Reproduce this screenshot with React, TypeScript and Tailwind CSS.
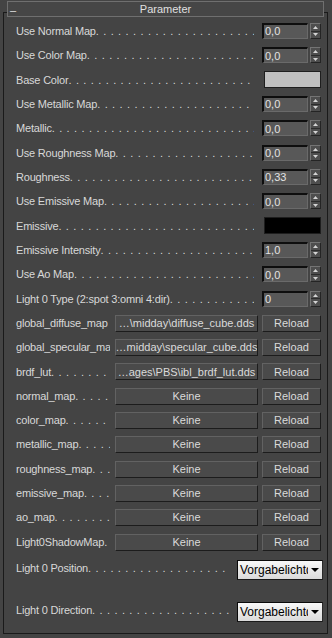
import React from 'react';

const DOTS = '.'.repeat(70);

type Row =
  | { kind: 'spin'; label: string; value: string }
  | { kind: 'color'; label: string; color: string }
  | { kind: 'map'; label: string; file: string; dots?: boolean };

const rows: Row[] = [
  { kind: 'spin', label: 'Use Normal Map', value: '0,0' },
  { kind: 'spin', label: 'Use Color Map', value: '0,0' },
  { kind: 'color', label: 'Base Color', color: 'bg-[#c0c0c0]' },
  { kind: 'spin', label: 'Use Metallic Map', value: '0,0' },
  { kind: 'spin', label: 'Metallic', value: '0,0' },
  { kind: 'spin', label: 'Use Roughness Map', value: '0,0' },
  { kind: 'spin', label: 'Roughness', value: '0,33' },
  { kind: 'spin', label: 'Use Emissive Map', value: '0,0' },
  { kind: 'color', label: 'Emissive', color: 'bg-black' },
  { kind: 'spin', label: 'Emissive Intensity', value: '1,0' },
  { kind: 'spin', label: 'Use Ao Map', value: '0,0' },
  { kind: 'spin', label: 'Light 0 Type (2:spot 3:omni 4:dir)', value: '0' },
  { kind: 'map', label: 'global_diffuse_map', file: '…\\midday\\diffuse_cube.dds', dots: false },
  { kind: 'map', label: 'global_specular_map', file: '…midday\\specular_cube.dds', dots: false },
  { kind: 'map', label: 'brdf_lut', file: '…ages\\PBS\\ibl_brdf_lut.dds' },
  { kind: 'map', label: 'normal_map', file: 'Keine' },
  { kind: 'map', label: 'color_map', file: 'Keine' },
  { kind: 'map', label: 'metallic_map', file: 'Keine' },
  { kind: 'map', label: 'roughness_map', file: 'Keine' },
  { kind: 'map', label: 'emissive_map', file: 'Keine' },
  { kind: 'map', label: 'ao_map', file: 'Keine' },
  { kind: 'map', label: 'Light0ShadowMap', file: 'Keine' },
];

function Label({ text, dots = true, className = '' }: { text: string; dots?: boolean; className?: string }) {
  return (
    <div className={`flex min-w-0 overflow-hidden whitespace-nowrap ${className}`}>
      <span className="shrink-0 tracking-[-0.2px]">{text}</span>
      {dots && <span className="min-w-0 flex-1 overflow-hidden tracking-[4.4px]">{DOTS}</span>}
    </div>
  );
}

function Spinner({ value }: { value: string }) {
  return (
    <div className="ml-[8px] flex h-[16px] shrink-0">
      <div className="flex w-[46px] items-center border-t-2 border-l-2 border-b border-r border-t-[#0e0e0e] border-l-[#0e0e0e] border-b-[#6a6a6a] border-r-[#6a6a6a] bg-[#585858] pl-[1px] text-[#e2e2e2]">
        {value}
      </div>
      <div className="ml-[2px] flex w-[11px] flex-col border border-t-[#747474] border-l-[#747474] border-b-[#242424] border-r-[#242424] bg-[#4e4e4e]">
        <div className="flex flex-1 items-center justify-center">
          <svg width="5" height="3" viewBox="0 0 5 3">
            <path d="M2.5 0L5 3H0Z" fill="#d4d4d4" />
          </svg>
        </div>
        <div className="h-px bg-[#2c2c2c]" />
        <div className="flex flex-1 items-center justify-center">
          <svg width="5" height="3" viewBox="0 0 5 3">
            <path d="M0 0H5L2.5 3Z" fill="#d4d4d4" />
          </svg>
        </div>
      </div>
    </div>
  );
}

function Btn({ children, wide }: { children: React.ReactNode; wide?: boolean }) {
  return (
    <div
      className={`flex h-[17px] shrink-0 items-center justify-center overflow-hidden whitespace-nowrap border border-t-[#626262] border-l-[#626262] border-b-[#1c1c1c] border-r-[#1c1c1c] bg-[#4a4a4a] text-[#dadada] ${
        wide ? 'ml-[5px] w-[143px]' : 'ml-[4px] w-[59px]'
      }`}
    >
      {children}
    </div>
  );
}

function Dropdown() {
  return (
    <div className="ml-[8px] flex h-[20px] w-[86px] shrink-0 items-center border border-t-[#0a0a0a] border-l-[#0a0a0a] border-b-[#1a1a1a] border-r-[#2a2a2a] bg-gradient-to-b from-[#f8f8f8] to-[#dadada] text-black">
      <span className="min-w-0 flex-1 overflow-hidden whitespace-nowrap pl-[2px] text-[12px]">Vorgabelichtquelle</span>
      <div className="flex w-[14px] shrink-0 items-center justify-center">
        <svg width="8" height="4" viewBox="0 0 8 4">
          <path d="M0 0H8L4 4Z" fill="#000" />
        </svg>
      </div>
    </div>
  );
}

export default function App() {
  return (
    <div
      className="h-[638px] w-[332px] bg-[#444444] pt-[12px] pr-[4px] pb-[4px] pl-[3px] text-[11px] text-[#d8d8d8]"
      style={{ fontFamily: '"Liberation Sans", Arial, sans-serif' }}
    >
      <div className="flex h-full flex-col border border-[#1a1a1a]">
        {/* Rollout header */}
        <div className="relative mx-[3px] -mt-[12px] flex h-[16px] shrink-0 items-center border border-[#6f6f6f] bg-[#464646] text-[#e0e0e0]">
          <span className="absolute left-[2px] top-[0px]">–</span>
          <span className="flex-1 text-center">Parameter</span>
        </div>

        <div className="mt-[2px] flex flex-col pl-[12px] pr-[6px]">
          {rows.map((r) => (
            <div key={r.label} className="flex h-[24.33px] items-center">
              {r.kind === 'spin' && (
                <>
                  <Label text={r.label} className="flex-1" />
                  <Spinner value={r.value} />
                </>
              )}
              {r.kind === 'color' && (
                <>
                  <Label text={r.label} className="flex-1" />
                  <div className={`ml-[10px] h-[17px] w-[57px] shrink-0 border border-[#1e1e1e] ${r.color}`} />
                </>
              )}
              {r.kind === 'map' && (
                <>
                  <Label text={r.label} dots={r.dots !== false} className="w-[94px] shrink-0" />
                  <Btn wide>{r.file}</Btn>
                  <Btn>Reload</Btn>
                </>
              )}
            </div>
          ))}

          <div className="flex h-[28px] items-center">
            <Label text="Light 0 Position" className="flex-1" />
            <div className="mt-[3px] -mr-[2px]">
              <Dropdown />
            </div>
          </div>
          <div className="h-[14px]" />
          <div className="flex h-[28px] items-center">
            <Label text="Light 0 Direction" className="flex-1" />
            <div className="mt-[4px] -mr-[2px]">
              <Dropdown />
            </div>
          </div>
        </div>
      </div>
    </div>
  );
}
